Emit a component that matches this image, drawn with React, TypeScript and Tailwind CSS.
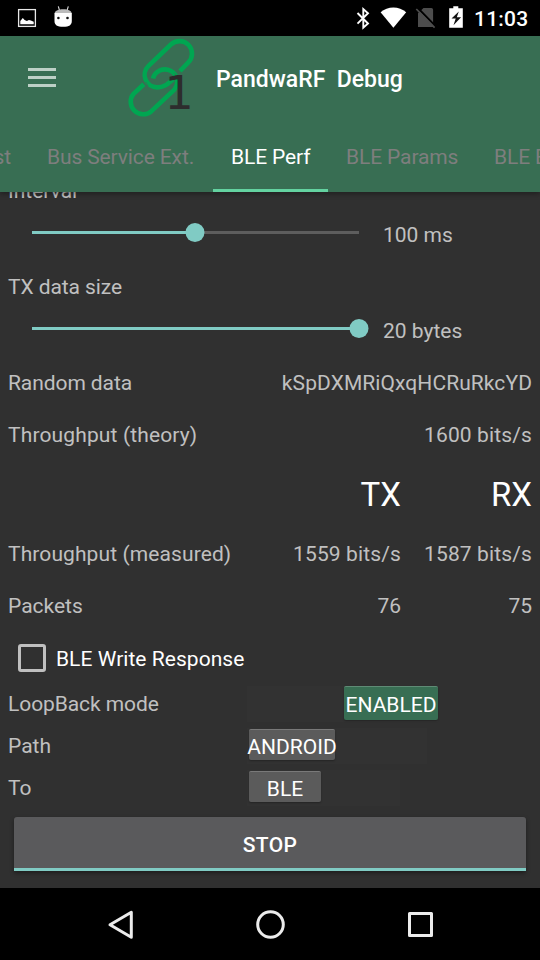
import React from "react";

const FONT = "font-['Roboto','Noto_Sans',sans-serif]";

function StatusBar() {
  return (
    <div className="flex h-9 shrink-0 items-center bg-black text-white">
      <svg width="80" height="36" viewBox="0 0 80 36" className="shrink-0">
        <rect x="18.6" y="9.6" width="16.8" height="16.8" fill="none" stroke="#e8e8e8" strokeWidth="1.3" />
        <path d="M20.3 24.3V21l2.500-3 1.800 2 2.300 1 2-1 2 .6 2.800 1.200v2.500z" fill="#fff" />
        <path d="M58.3 6.3l1.2 4M68.3 6.3l-1.2 4" stroke="#ddd" strokeWidth="1.1" />
        <path d="M54.500 13.200c1-3 4-4 8.800-4s7.500 1 8.500 4z" fill="#bcbcbc" />
        <path d="M54.500 13h17.300v8c0 4-2.500 5.800-8.600 5.800s-8.700-1.800-8.700-5.800z" fill="#fff" />
        <circle cx="58.400" cy="18" r="1.300" fill="#111" />
        <circle cx="67.500" cy="18" r="1.300" fill="#111" />
      </svg>
      <svg width="125" height="36" viewBox="345 0 125 36" className="ml-auto shrink-0">
        <path d="M357.500 13l10.500 10.500-4.700 4.200V9l4.700 4.200L357.500 23.700" fill="none" stroke="#fff" strokeWidth="1.900" />
        <path d="M380.600 12.300c7-6.300 18.500-6.300 25.600 0L393.400 27.800z" fill="#fff" />
        <path d="M423.500 8h7.800a1.800 1.800 0 0 1 1.800 1.800V27H418V13.200z" fill="#4d4d4d" />
        <path d="M417.300 7.500L436 26.700" stroke="#000" strokeWidth="2" />
        <path d="M416.300 9l18.300 18.700" stroke="#4d4d4d" strokeWidth="1.700" />
        <path d="M453.300 6.300h5v2h4.500v19.500H449.200V8.300h4.100z" fill="#fff" />
        <path d="M458.800 11.500l-7.300 7h4.200l-2.200 6.700 7.600-8h-4.300z" fill="#111" />
      </svg>
      <span className="mt-px mr-[12px] ml-[4px] w-[54px] text-[21px] leading-9 font-medium tracking-[0.2px] whitespace-nowrap">11:03</span>
    </div>
  );
}

function LinkLogo() {
  return (
    <svg width="76" height="86" viewBox="122 36 76 86" className="shrink-0">
      <g fill="none" stroke="#00a651" strokeWidth="4.600">
        <path d="M180 71L188.100 62.700A12.500 12.500 0 0 0 170.900 44.500L148.500 65.900A12.500 12.500 0 0 0 157.500 87.400C164 87.400 167 84.500 173 79.500" />
        <path d="M143.800 84.300L133.600 93.800A12.500 12.500 0 0 0 151.200 111.400L174.300 89.600A12.300 12.300 0 1 0 153 78.500" />
      </g>
      <path
        d="M145.500 82l2.500 4M149.700 73.500c-1.500 2-1.500 4 .2 5.500M174.500 73.500c2 1.500 2.500 3 2.300 4.500M178.500 71.500l2 2.500"
        fill="none"
        stroke="#386e53"
        strokeWidth="0.9"
      />
      <text x="164.500" y="109" fontSize="46" fill="#2d2d2d" className="font-['DejaVu_Sans',sans-serif]">1</text>
    </svg>
  );
}

function Header() {
  return (
    <header className="relative z-10 h-[156px] shrink-0 overflow-hidden bg-[#386e53] shadow-[0_2px_5px_rgba(0,0,0,0.35)]">
      <div className="flex h-[86px] items-center">
        <div className="ml-7 flex w-7 flex-col gap-[5px] pb-[3px]">
          <div className="h-[3px] bg-[#bdd0c6]" />
          <div className="h-[3px] bg-[#bdd0c6]" />
          <div className="h-[3px] bg-[#bdd0c6]" />
        </div>
        <div className="ml-[66px] flex">
          <LinkLogo />
        </div>
        <h1 className="ml-[18px] pt-[2px] text-[23px] font-medium whitespace-pre text-white">PandwaRF  Debug</h1>
      </div>
      <nav className="-ml-[60px] flex h-[70px] w-[720px] text-[21px] leading-[70px] tracking-[-0.12px] whitespace-nowrap text-[#7e7e7e]">
        <span className="w-[89px] pr-[18px] text-right">Test</span>
        <span className="w-[184px] pl-[18px]">Bus Service Ext.</span>
        <span className="w-[115px] border-b-[3px] border-[#63d2a0] pl-[18px] text-white">BLE Perf</span>
        <span className="w-[148px] pl-[18px]">BLE Params</span>
        <span className="pl-[18px]">BLE Ext.</span>
      </nav>
    </header>
  );
}

function Slider({ percent, value, height }: { percent: number; value: string; height: string }) {
  return (
    <div className={`flex items-center ${height}`}>
      <div className="relative -mt-[5px] ml-6 h-[3px] w-[327px] bg-[#5d5d5d]">
        <div className="h-full bg-[#80cbc4]" style={{ width: `${percent}%` }} />
        <div
          className="absolute -top-[8px] -ml-[0.5px] size-[19px] -translate-x-1/2 rounded-full bg-[#80cbc4]"
          style={{ left: `${percent}%` }}
        />
      </div>
      <span className="ml-6">{value}</span>
    </div>
  );
}

function Stats() {
  return (
    <>
      <div className="flex h-[58px] items-center justify-between">
        <span className="tracking-[-0.08px]">Random data</span>
        <span className="tracking-[0.08px]">kSpDXMRiQxqHCRuRkcYD</span>
      </div>
      <div className="flex h-[46px] items-center justify-between">
        <span className="tracking-[0.14px]">Throughput (theory)</span>
        <span className="tracking-[0.13px]">1600 bits/s</span>
      </div>
      <div className="-mt-px flex h-[75px] items-center justify-end text-[33px] text-white">
        <span>TX</span>
        <span className="w-[131px] text-right">RX</span>
      </div>
      <div className="flex h-[44px] items-center">
        <span className="tracking-[0.1px]">Throughput (measured)</span>
        <span className="ml-auto tracking-[0.13px]">1559 bits/s</span>
        <span className="w-[131px] text-right tracking-[0.13px]">1587 bits/s</span>
      </div>
      <div className="flex h-[60px] items-center">
        <span>Packets</span>
        <span className="ml-auto">76</span>
        <span className="w-[131px] text-right">75</span>
      </div>
    </>
  );
}

function Toggles() {
  return (
    <>
      <div className="flex h-[46px] items-center text-white">
        <div className="mt-[-2px] ml-[10px] size-[28px] rounded-[3px] border-[3px] border-[#bfbfbf]" />
        <span className="ml-[10px] tracking-[0.04px]">BLE Write Response</span>
      </div>
      <div className="flex h-[44px] items-center">
        <span className="w-[239px] tracking-[-0.08px]">LoopBack mode</span>
        <div className="flex h-9 w-[191px] items-center justify-end bg-[#323232]">
          <div className="mt-[-2px] flex h-[34px] w-[94px] items-center justify-center rounded-[2px] border-t border-[#5f8b75] bg-[#386e53] pt-[3px] whitespace-nowrap text-white shadow-[0_1px_2px_rgba(0,0,0,0.3)]">
            ENABLED
          </div>
        </div>
      </div>
      <div className="flex h-[40px] items-center">
        <span className="w-[239px]">Path</span>
        <div className="flex h-9 w-[180px] items-center bg-[#323232]">
          <div className="mt-[-3px] ml-[2px] flex h-[31px] w-[86px] items-center justify-center rounded-[2px] border-t border-[#797979] bg-[#5b5b5b] pt-[5px] whitespace-nowrap text-white shadow-[0_1px_2px_rgba(0,0,0,0.3)]">
            ANDROID
          </div>
        </div>
      </div>
      <div className="flex h-[44px] items-center">
        <span className="w-[239px]">To</span>
        <div className="flex h-9 w-[153px] items-center bg-[#323232]">
          <div className="mt-[-3px] ml-[2px] flex h-[31px] w-[72px] items-center justify-center rounded-[2px] border-t border-[#797979] bg-[#5b5b5b] pt-[5px] text-white shadow-[0_1px_2px_rgba(0,0,0,0.3)]">
            BLE
          </div>
        </div>
      </div>
    </>
  );
}

function NavigationBar() {
  return (
    <div className="flex h-[72px] shrink-0 items-center justify-center bg-black">
      <svg width="360" height="72" viewBox="90 0 360 72" fill="none" stroke="#ececec" strokeWidth="3" strokeLinejoin="round">
        <path d="M131.300 24.200v25.100L110 36.700z" />
        <circle cx="270.500" cy="36.500" r="12.800" />
        <rect x="409.500" y="25.500" width="22" height="22" />
      </svg>
    </div>
  );
}

export default function App() {
  return (
    <div className={`flex h-[960px] w-[540px] flex-col overflow-hidden bg-[#303030] ${FONT}`}>
      <StatusBar />
      <Header />
      <main className="flex-1 overflow-hidden px-2 text-[21px] leading-[25px] text-[#c0c0c0]">
        <div className="-mt-[14px] h-[26px] pt-px">Interval</div>
        <Slider percent={50} value="100 ms" height="h-[62px]" />
        <div className="flex h-[42px] items-center tracking-[-0.08px]">TX data size</div>
        <Slider percent={100} value="20 bytes" height="h-[46px]" />
        <Stats />
        <Toggles />
        <button className="mx-[6px] mt-[7px] flex h-[54px] w-[512px] items-center justify-center rounded-t-[3px] border-b-[3px] border-[#80cbc4] bg-[#5a5a5c] pt-[5px] font-medium tracking-[0.3px] text-white shadow-[0_2px_4px_rgba(0,0,0,0.4)]">
          STOP
        </button>
      </main>
      <NavigationBar />
    </div>
  );
}
